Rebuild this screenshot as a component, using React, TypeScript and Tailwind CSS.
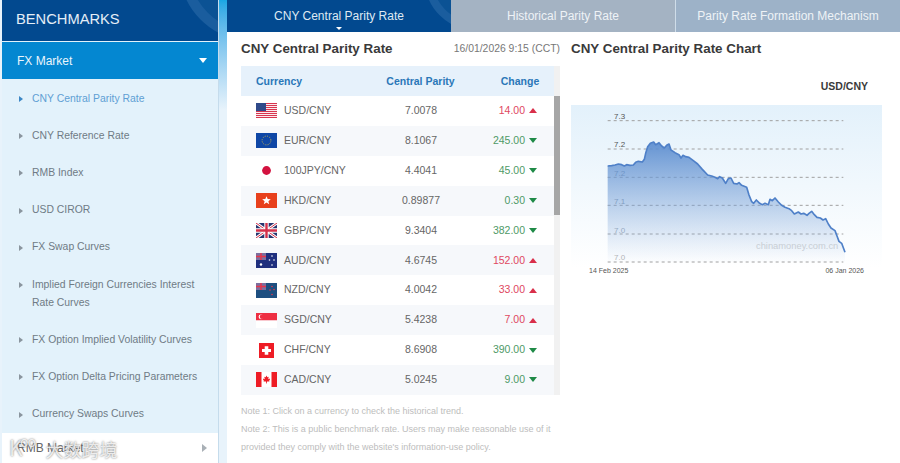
import React from "react";

const F = "font-['Liberation_Sans',Arial,sans-serif]";

function Flag({ code }: { code: string }) {
  const c = "w-[21px] h-[15px] block";
  switch (code) {
    case "USD":
      return (
        <svg viewBox="0 0 21 15" className={c}>
          <rect width="21" height="15" fill="#fff" />
          {[0, 2, 4, 6, 8, 10, 12, 14].map((y) => (
            <rect key={y} y={y} width="21" height="1.1" fill="#d8354f" />
          ))}
          <rect width="10" height="8" fill="#2f4a8a" />
        </svg>
      );
    case "EUR":
      return (
        <svg viewBox="0 0 21 15" className={c}>
          <rect width="21" height="15" fill="#0f47a6" />
          <circle cx="10.5" cy="7.5" r="4.4" fill="none" stroke="#e6c33c" strokeWidth="0.8" strokeDasharray="1 1.3" />
        </svg>
      );
    case "100JPY":
      return (
        <svg viewBox="0 0 21 15" className={c}>
          <rect width="21" height="15" fill="#fff" />
          <circle cx="10.5" cy="7.5" r="4.4" fill="#d3123f" />
        </svg>
      );
    case "HKD":
      return (
        <svg viewBox="0 0 21 15" className={c}>
          <rect width="21" height="15" fill="#e8401c" />
          <path d="M10.5 3.2L11.7 6.1L14.8 6.2L12.4 8.2L13.2 11.2L10.5 9.5L7.8 11.2L8.6 8.2L6.2 6.2L9.3 6.1Z" fill="#fff" />
        </svg>
      );
    case "GBP":
      return (
        <svg viewBox="0 0 21 15" className={c}>
          <rect width="21" height="15" fill="#27356f" />
          <path d="M0 0L21 15M21 0L0 15" stroke="#fff" strokeWidth="3" />
          <path d="M0 0L21 15M21 0L0 15" stroke="#d3304a" strokeWidth="1" />
          <path d="M10.5 0V15M0 7.5H21" stroke="#fff" strokeWidth="4.4" />
          <path d="M10.5 0V15M0 7.5H21" stroke="#d3304a" strokeWidth="2.4" />
        </svg>
      );
    case "AUD":
      return (
        <svg viewBox="0 0 21 15" className={c}>
          <rect width="21" height="15" fill="#1f2f7e" />
          <rect width="10" height="7" fill="#7d6f9e" />
          <path d="M5 0V7M0 3.5H10" stroke="#e8354a" strokeWidth="1.4" />
          <circle cx="5" cy="11.5" r="1.2" fill="#fff" />
          <circle cx="16" cy="3" r="0.8" fill="#fff" />
          <circle cx="13.5" cy="7" r="0.8" fill="#fff" />
          <circle cx="18" cy="7" r="0.8" fill="#fff" />
          <circle cx="16" cy="12" r="0.8" fill="#fff" />
        </svg>
      );
    case "NZD":
      return (
        <svg viewBox="0 0 21 15" className={c}>
          <rect width="21" height="15" fill="#1e4f80" />
          <rect width="10" height="7" fill="#7d6f9e" />
          <path d="M5 0V7M0 3.5H10" stroke="#e8354a" strokeWidth="1.4" />
          <circle cx="16" cy="3.5" r="0.8" fill="#e8354a" />
          <circle cx="14" cy="7" r="0.8" fill="#e8354a" />
          <circle cx="18" cy="6.5" r="0.8" fill="#e8354a" />
          <circle cx="16" cy="11.5" r="0.8" fill="#e8354a" />
        </svg>
      );
    case "SGD":
      return (
        <svg viewBox="0 0 21 15" className={c}>
          <rect width="21" height="7.5" fill="#ee2f43" />
          <rect y="7.5" width="21" height="7.5" fill="#fff" />
          <circle cx="5" cy="3.8" r="2.4" fill="#fff" />
          <circle cx="6" cy="3.8" r="2.2" fill="#ee2f43" />
        </svg>
      );
    case "CHF":
      return (
        <svg viewBox="0 0 21 15" className={c}>
          <rect x="3" width="15" height="15" fill="#ee1c25" />
          <path d="M8.7 3.2H12.3V5.9H15V9.1H12.3V11.8H8.7V9.1H6V5.9H8.7Z" fill="#fff" />
        </svg>
      );
    default:
      return (
        <svg viewBox="0 0 21 15" className={c}>
          <rect width="21" height="15" fill="#fff" />
          <rect width="5.5" height="15" fill="#ee1c25" />
          <rect x="15.5" width="5.5" height="15" fill="#ee1c25" />
          <path d="M10.5 3.4L11.4 5.2L12.7 4.7L12.2 7.2L13.7 6.6L14 7.6L13.2 8.6L13.4 9.6L11 9.4L10.8 11.6H10.2L10 9.4L7.6 9.6L7.8 8.6L7 7.6L7.3 6.6L8.8 7.2L8.3 4.7L9.6 5.2Z" fill="#ee1c25" />
        </svg>
      );
  }
}

const rows: [string, string, string, boolean][] = [
  ["USD", "7.0078", "14.00", true],
  ["EUR", "8.1067", "245.00", false],
  ["100JPY", "4.4041", "45.00", false],
  ["HKD", "0.89877", "0.30", false],
  ["GBP", "9.3404", "382.00", false],
  ["AUD", "4.6745", "152.00", true],
  ["NZD", "4.0042", "33.00", true],
  ["SGD", "5.4238", "7.00", true],
  ["CHF", "8.6908", "390.00", false],
  ["CAD", "5.0245", "9.00", false],
];

const menu: string[] = [
  "CNY Central Parity Rate",
  "CNY Reference Rate",
  "RMB Index",
  "USD CIROR",
  "FX Swap Curves",
  "Implied Foreign Currencies Interest Rate Curves",
  "FX Option Implied Volatility Curves",
  "FX Option Delta Pricing Parameters",
  "Currency Swaps Curves",
];

const pts =
  "128,198 140,197 150,195 160,192 170,194 178,198 185,194 195,196 205,195 212,187 220,184 232,186 238,178 242,160 248,140 256,130 266,126 272,134 282,128 290,138 298,144 305,136 312,132 318,150 330,158 342,164 348,174 354,166 362,170 372,172 385,182 398,192 412,208 428,225 440,228 450,232 458,236 464,230 472,234 482,250 490,236 498,234 506,250 516,252 522,248 530,256 545,262 552,285 560,305 566,310 574,300 584,310 592,314 600,310 610,314 615,298 622,302 630,294 640,306 650,316 660,322 672,326 680,332 688,342 700,336 708,342 716,340 726,346 732,340 740,334 748,344 756,352 766,354 774,360 782,356 790,372 798,384 810,392 816,408 822,424 830,430 840,457";

const ticks: [string, number, number, string][] = [
  ["7.3", 62, 58, "#555"],
  ["7.2", 147, 142, "#555"],
  ["7.2", 232, 228, "#7d8ea3"],
  ["7.1", 316, 311, "#8d9cae"],
  ["7.0", 402, 398, "#a0acb9"],
  ["7.0", 486, 480, "#b5b5b5"],
];

function Chart() {
  return (
    <div className="mt-[12px] h-[163px] w-[311px] bg-gradient-to-b from-[#e3f1fb] to-white">
      <svg viewBox="18 15 933 489" className="block h-full w-full">
        <defs>
          <linearGradient id="a" gradientUnits="userSpaceOnUse" x1="0" y1="126" x2="0" y2="486">
            <stop offset="0" stopColor="#5d8ed0" stopOpacity="0.95" />
            <stop offset="1" stopColor="#8db0dd" stopOpacity="0.02" />
          </linearGradient>
        </defs>
        {ticks.map(([t, y, ly, col]) => (
          <g key={y}>
            <line x1="128" x2="835" y1={y} y2={y} stroke="#a0a0a0" strokeWidth="3" strokeDasharray="9 9" />
            <text x="147" y={ly} fontSize="24" fill={col} fontFamily="Liberation Sans, sans-serif">
              {t}
            </text>
          </g>
        ))}
        <polygon points={`${pts} 840,486 128,486`} fill="url(#a)" />
        <polyline points={pts} fill="none" stroke="#4f80c8" strokeWidth="5" strokeLinejoin="round" />
        <text x="573" y="447" fontSize="28" fill="#c8ced5" fontFamily="Liberation Sans, sans-serif">
          chinamoney.com.cn
        </text>
      </svg>
    </div>
  );
}

export default function App() {
  return (
    <div className={`${F} relative flex h-[463px] w-[900px] overflow-hidden bg-[#e8f3fb]`}>
      <aside className="ml-[2px] flex h-full w-[217px] flex-col border-r border-[#c5dcec] bg-[#e3f2fb]">
        <div className="relative flex h-[41px] shrink-0 items-center overflow-hidden bg-[#02498f] pb-[2px] pl-[14px] text-[14.7px] text-[#e4eef7]">
          BENCHMARKS
          <div className="absolute right-[-102px] top-[-100px] h-[140px] w-[140px] rounded-full border-[10px] border-[#1a5d9e] bg-[#0b5294]" />
        </div>
        <div className="mt-[1px] flex h-[37px] shrink-0 items-center justify-between bg-[#0487d1] pl-[15px] pr-[11px] text-[12px] text-[#eaf5fc]">
          <span>FX Market</span>
          <span className="h-0 w-0 border-x-[4px] border-t-[5px] border-x-transparent border-t-white" />
        </div>
        <ul className="flex-1 pt-[1px]">
          {menu.map((m, i) => (
            <li
              key={m}
              className={`relative flex py-[9.6px] pl-[30px] pr-[10px] text-[10.4px] leading-[18px] ${i === 0 ? "text-[#5f9fd4]" : "text-[#6f7b85]"}`}
            >
              <span className={`absolute left-[17px] top-[16px] h-0 w-0 border-y-[3px] border-l-[4px] border-y-transparent ${i === 0 ? "border-l-[#3d87c5]" : "border-l-[#8a959e]"}`} />
              {m}
            </li>
          ))}
        </ul>
        <div className="flex h-[30px] shrink-0 items-center justify-between bg-white pl-[15px] pr-[11px] text-[12px] text-[#666]">
          <span>RMB Market</span>
          <span className="h-0 w-0 border-y-[4px] border-l-[5px] border-y-transparent border-l-[#a9b0b6]" />
        </div>
      </aside>

      <div className="w-[8px] shrink-0 bg-gradient-to-b from-[#17a7e4] to-[#e8f3fb] bg-[length:100%_110px] bg-no-repeat" />

      <main className="flex min-w-0 flex-1 flex-col bg-white">
        <nav className="flex h-[32px] shrink-0 text-[12px]">
          <div className="relative flex w-[224px] items-center justify-center overflow-hidden bg-[#02498f] text-[#dfe9f3]">
            <div className="absolute right-[-74px] top-[-70px] h-[100px] w-[100px] rounded-full border-[8px] border-[#1a5d9e] bg-[#0b5294]" />
            <span className="relative">CNY Central Parity Rate</span>
            <span className="absolute bottom-[2px] left-1/2 h-0 w-0 -translate-x-1/2 border-x-[3px] border-t-[3px] border-x-transparent border-t-white" />
          </div>
          <div className="flex w-[225px] items-center justify-center border-r border-[#cfdde9] bg-[#a4b3c3] text-[#eef2f6]">Historical Parity Rate</div>
          <div className="flex flex-1 items-center justify-center bg-[#9db2c8] text-[#eef2f6]">Parity Rate Formation Mechanism</div>
        </nav>

        <div className="flex flex-1 pl-[14px]">
          <section className="w-[319px] shrink-0">
            <div className="flex h-[34px] items-center justify-between">
              <h2 className="text-[13.4px] font-bold text-[#3a3a3a]">CNY Central Parity Rate</h2>
              <span className="text-[10.4px] text-[#777]">16/01/2026 9:15 (CCT)</span>
            </div>
            <div className="relative">
              <div className="flex h-[30px] items-center bg-[#e6f1fb] pt-[1px] text-[10.5px] font-bold text-[#2a77b8]">
                <span className="w-[128px] pl-[15px]">Currency</span>
                <span className="w-[100px] pl-[3px] text-center">Central Parity</span>
                <span className="w-[83px] pl-[19px] text-center">Change</span>
              </div>
              {rows.map(([c, v, d, up], i) => (
                <div key={c} className={`flex h-[29.9px] items-center pr-[8px] text-[10.5px] ${i % 2 ? "bg-[#f6f8fb]" : "bg-white"}`}>
                  <span className="flex w-[128px] items-center gap-[7px] pl-[15px] text-[#666]">
                    <Flag code={c} />
                    {c}/CNY
                  </span>
                  <span className="w-[100px] pl-[4px] text-center text-[#666]">{v}</span>
                  <span className={`flex w-[68px] items-center justify-end gap-[4px] ${up ? "text-[#e0485f]" : "text-[#4f9a67]"}`}>
                    {d}
                    <span className={`h-0 w-0 border-x-[4px] border-x-transparent ${up ? "border-b-[5px] border-b-[#d92f4a]" : "border-t-[5px] border-t-[#1f8a47]"}`} />
                  </span>
                </div>
              ))}
              <div className="absolute bottom-0 right-0 top-0 w-[6px] bg-[#f1f1f1]">
                <div className="mt-[30px] h-[119px] w-full bg-[#a6a6a6]" />
              </div>
            </div>
            <div className="mt-[7px] text-[9px] leading-[18px] text-[#bdbdbd]">
              <p>Note 1: Click on a currency to check the historical trend.</p>
              <p>
                Note 2: This is a public benchmark rate. Users may make reasonable use of it
                <br />
                provided they comply with the website's information-use policy.
              </p>
            </div>
          </section>

          <section className="ml-[11px] w-[311px] shrink-0">
            <h2 className="flex h-[34px] items-center text-[13.4px] font-bold text-[#3a3a3a]">CNY Central Parity Rate Chart</h2>
            <div className="mt-[13px] pr-[14px] text-right text-[10.5px] font-bold leading-[14px] text-[#3a3a3a]">USD/CNY</div>
            <Chart />
            <div className="-mt-[2px] flex justify-between px-[18px] text-[7px] leading-[10px] text-[#555]">
              <span>14 Feb 2025</span>
              <span>06 Jan 2026</span>
            </div>
          </section>
        </div>
      </main>

      <div className="absolute bottom-[5px] left-[9px] flex items-end font-['Noto_Sans_CJK_SC',sans-serif] text-[18px] leading-none text-white/80 [text-shadow:0_0_2px_#666]">
        <span className="relative mr-[23px] text-[21px]">
          K
          <span className="absolute left-[11px] top-[-3px] text-[14px] tracking-[-1px]">oo</span>
        </span>
        <span>大数跨境</span>
      </div>
    </div>
  );
}
